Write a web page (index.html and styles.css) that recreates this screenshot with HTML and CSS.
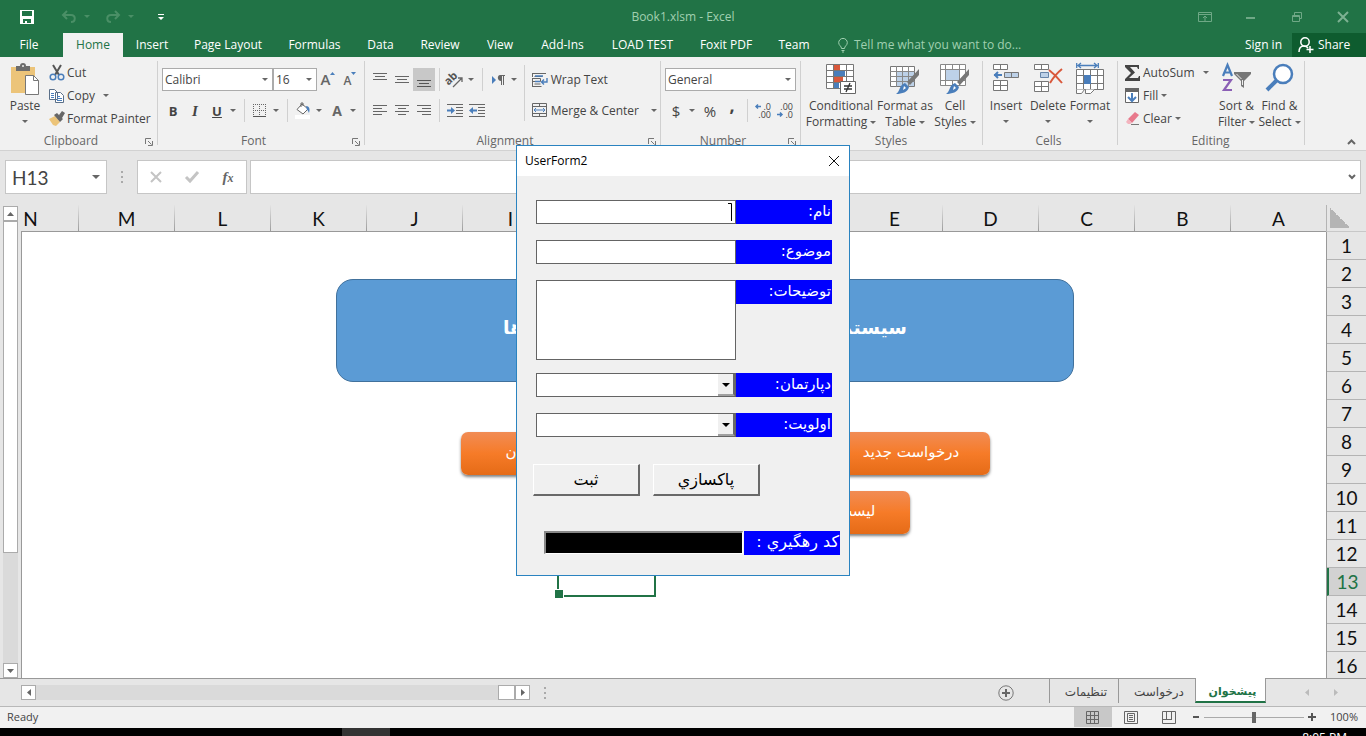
FILE: index.html
```html
<!DOCTYPE html>
<html lang="en">
<head>
  <meta charset="UTF-8">
  <meta name="viewport" content="width=device-width, initial-scale=1.0">
  <title>Book1.xlsm - Excel</title>
  <link rel="stylesheet" href="styles.css">
</head>
<body>
  <header class="title-bar">
    <div class="quick-access">
      <button aria-label="Save"><svg width="14" height="14" viewBox="0 0 14 14"><path fill="#fff" fill-rule="evenodd" d="M0 0h14v14H0zM2 1v5h10V1zM3 9v4h2v-2h2v2h4V9z"/></svg></button>
      <button class="dim" aria-label="Undo"><svg width="14" height="12" viewBox="0 0 14 12"><path fill="none" stroke="#4a8f66" stroke-width="2" d="M5 0L1 4l4 4M1 4h8c5 0 5 7 0 7"/></svg><span class="caret"></span></button>
      <button class="dim" aria-label="Redo"><svg width="14" height="12" viewBox="0 0 14 12"><path fill="none" stroke="#4a8f66" stroke-width="2" d="M9 0l4 4-4 4M13 4H5c-5 0-5 7 0 7"/></svg><span class="caret"></span></button>
      <button aria-label="Customize toolbar"><svg width="6" height="8" viewBox="0 0 6 8"><path fill="#fff" d="M0 1h6v1H0zM0 4h6L3 7z"/></svg></button>
    </div>
    <h1>Book1.xlsm - Excel</h1>
    <div class="window-buttons">
      <button aria-label="Ribbon display"><svg width="14" height="10" viewBox="0 0 14 10"><path fill="none" stroke="#6fa886" d="M.5.5h13v9H.5zM1 2.500h12M7 9V4M5 6l2-2 2 2"/></svg></button>
      <button aria-label="Minimize"><svg width="10" height="10" viewBox="0 0 10 10"><path stroke="#6fa886" stroke-width="2" d="M0 6h9"/></svg></button>
      <button aria-label="Restore"><svg width="10" height="10" viewBox="0 0 10 10"><path fill="none" stroke="#6fa886" d="M.5 3.500h7v6h-7zM2.500 3V.5h7v6H8M0 4.500h8"/></svg></button>
      <button aria-label="Close"><svg width="10" height="10" viewBox="0 0 10 10"><path stroke="#7db192" stroke-width="2" d="M0 0l10 10M10 0L0 10"/></svg></button>
    </div>
  </header>

  <nav class="tabs">
    <button>File</button>
    <button class="active">Home</button>
    <button>Insert</button>
    <button>Page Layout</button>
    <button>Formulas</button>
    <button>Data</button>
    <button>Review</button>
    <button>View</button>
    <button>Add-Ins</button>
    <button>LOAD TEST</button>
    <button>Foxit PDF</button>
    <button>Team</button>
    <button class="tell-me"><svg width="10" height="15" viewBox="0 0 10 15"><path fill="none" stroke="#a0d0b0" d="M3.500 10.500C3.500 8 .7 7.500.7 4.700a4.300 4.300 0 0 1 8.600 0C9.300 7.500 6.500 8 6.500 10.500zM3.500 12.500h3M4 14h2"/></svg>Tell me what you want to do...</button>
    <button class="sign-in">Sign in</button>
    <button class="share"><svg width="16" height="16" viewBox="0 0 16 16"><circle cx="7" cy="5" r="4.200" fill="none" stroke="#fff" stroke-width="1.500"/><path fill="none" stroke="#fff" stroke-width="1.500" d="M1 15c0-4 2-6 5-6 2 0 3 .5 4 2M12 9v7M8.500 12.500h7"/></svg>Share</button>
  </nav>

  <section class="ribbon">
    <div class="group clipboard">
      <div class="group-body">
        <button class="big">
          <svg width="30" height="32" viewBox="0 0 30 32"><path fill="#ecc479" d="M1 4h24v26H1z"/><path fill="#6d6d6d" d="M6 3h4a3 3 0 0 1 6 0h4v5H6z"/><circle cx="13" cy="3" r="1" fill="#eee"/><path fill="#fff" stroke="#777" d="M15.500 12.500h8l5 5v14h-13z"/><path fill="none" stroke="#777" d="M23.500 12.500v5h5"/></svg>
          Paste<span class="caret"></span>
        </button>
        <div class="stack">
          <button><svg width="16" height="16" viewBox="0 0 16 16"><path stroke="#555" stroke-width="2" d="M4 0l6 10M12 0L6 10"/><g fill="none" stroke="#4a7ebb" stroke-width="1.500"><circle cx="4" cy="12" r="2.800"/><circle cx="12" cy="12" r="2.800"/></g></svg>Cut</button>
          <button><svg width="16" height="16" viewBox="0 0 16 16"><path fill="#fff" stroke="#5a6f88" d="M.5 1.500h5l3 3v7h-8zM6.500 4.500h5l3 3v7h-8z"/><path stroke="#4a7ebb" d="M2 5.500h3M2 7.500h3M2 9.500h3M8 8.500h3M8 10.500h5M8 12.500h5"/></svg>Copy <span class="caret wide"></span></button>
          <button><svg width="16" height="16" viewBox="0 0 16 16"><path fill="#ecc479" d="M0 8l6-3 5 6-4 4-3-1z"/><path fill="#666" d="M5 4l3-2 6 6-3 3zM10 4l3-4 3 2-3 5z"/></svg>Format Painter</button>
        </div>
      </div>
      <div class="group-name">Clipboard<svg class="launcher" width="8" height="8"><use href="#launch"/></svg></div>
    </div>

    <div class="group font">
      <div class="group-body rows">
        <div class="row">
          <span class="combo font-name"><select aria-label="Font"><option>Calibri</option></select><span class="caret"></span></span>
          <span class="combo font-size"><select aria-label="Font size"><option>16</option></select><span class="caret"></span></span>
          <button class="tool grow-font" aria-label="Increase font size"><span>A</span><svg width="5" height="4" viewBox="0 0 5 4"><path fill="#4a7ebb" d="M0 3h5L2.500 0z"/></svg></button>
          <button class="tool shrink-font" aria-label="Decrease font size"><span>A</span><svg width="5" height="4" viewBox="0 0 5 4"><path fill="#4a7ebb" d="M0 0h5L2.500 3z"/></svg></button>
        </div>
        <div class="row">
          <button class="tool bold">B</button>
          <button class="tool italic">I</button>
          <button class="tool underline">U</button>
          <button class="drop" aria-label="Underline style"><span class="caret"></span></button>
          <span class="sep"></span>
          <button class="tool" aria-label="Borders"><svg width="14" height="14" viewBox="0 0 14 14"><path fill="none" stroke="#666" stroke-dasharray="1 1" d="M.5 0v13M6.500 0v13M12.500 0v13M0 .5h13M0 6.500h13"/><path stroke="#555" d="M0 12.500h13"/></svg></button>
          <button class="drop" aria-label="Border style"><span class="caret"></span></button>
          <span class="sep"></span>
          <button class="tool" aria-label="Fill color"><svg width="18" height="17" viewBox="0 0 18 17"><path fill="#fff" stroke="#666" d="M3 7.500L8 2l6 5-5 5zM7 5V1h2v3"/><path fill="#4a7ebb" d="M12 4c4 0 4 4 3 7-1-2-1-3-2-3z"/><path fill="#fff" d="M1 13h15v4H1z"/></svg></button>
          <button class="drop" aria-label="Fill colors"><span class="caret"></span></button>
          <button class="tool font-color">A</button>
          <button class="drop" aria-label="Font colors"><span class="caret"></span></button>
        </div>
      </div>
      <div class="group-name">Font<svg class="launcher" width="8" height="8"><use href="#launch"/></svg></div>
    </div>

    <div class="group alignment">
      <div class="group-body">
        <div class="rows">
          <div class="row">
            <button class="tool" aria-label="Top align"><svg width="14" height="14" viewBox="0 0 14 14"><path stroke="#666" d="M0 .5h14M2 3.500h10M0 6.500h14"/></svg></button>
            <button class="tool" aria-label="Middle align"><svg width="14" height="14" viewBox="0 0 14 14"><path stroke="#666" d="M0 3.500h14M2 6.500h10M0 9.500h14"/></svg></button>
            <button class="tool pressed" aria-label="Bottom align"><svg width="14" height="14" viewBox="0 0 14 14"><path stroke="#555" d="M0 7.500h14M2 10.500h10M0 13.500h14"/></svg></button>
            <span class="sep"></span>
            <button class="tool" aria-label="Orientation"><svg width="16" height="16" viewBox="0 0 16 16"><text x="0" y="12" font-size="11" font-weight="bold" fill="#555" transform="rotate(-45 3 11)">ab</text><path fill="none" stroke="#666" stroke-width="1.300" d="M6 15l9-9M11 6h4v4"/></svg></button>
            <button class="drop" aria-label="Orientation options"><span class="caret"></span></button>
            <span class="sep"></span>
            <button class="tool" aria-label="Text direction"><svg width="13" height="10" viewBox="0 0 13 10"><path fill="#4a7ebb" d="M0 1l4 4-4 4z"/><path fill="#666" d="M8 0h5v1h-1v9h-1V1h-1v9H9V6C5 6 5 0 8 0z"/></svg></button>
            <button class="drop" aria-label="Direction options"><span class="caret"></span></button>
          </div>
          <div class="row">
            <button class="tool" aria-label="Align left"><svg width="14" height="12" viewBox="0 0 14 12"><path stroke="#666" d="M0 .5h14M0 3.500h9M0 6.500h14M0 9.500h9"/></svg></button>
            <button class="tool" aria-label="Center"><svg width="14" height="12" viewBox="0 0 14 12"><path stroke="#666" d="M0 .5h14M3 3.500h8M0 6.500h14M3 9.500h8"/></svg></button>
            <button class="tool" aria-label="Align right"><svg width="14" height="12" viewBox="0 0 14 12"><path stroke="#666" d="M0 .5h14M5 3.500h9M0 6.500h14M5 9.500h9"/></svg></button>
            <span class="sep"></span>
            <button class="tool" aria-label="Decrease indent"><svg width="16" height="14" viewBox="0 0 16 14"><path stroke="#666" d="M0 .5h16M9 3.500h7M9 6.500h7M9 9.500h7M0 12.500h16"/><path fill="#4a7ebb" d="M0 5.500h4V3l4 3.500L4 10V7.500H0z"/></svg></button>
            <button class="tool" aria-label="Increase indent"><svg width="16" height="14" viewBox="0 0 16 14"><path stroke="#666" d="M0 .5h16M9 3.500h7M9 6.500h7M9 9.500h7M0 12.500h16"/><path fill="#4a7ebb" d="M8 5.500H4V3L0 6.500 4 10V7.500h4z"/></svg></button>
          </div>
        </div>
        <span class="sep tall"></span>
        <div class="rows">
          <button class="text-tool"><svg width="16" height="16" viewBox="0 0 16 16"><path fill="none" stroke="#666" d="M.5 1v4M14 1.500H.5M2.500 4.500h8M.5 6v9M.5 6.500h8v3h-8M.5 14.500h9M2.500 12h6"/><path fill="none" stroke="#4a7ebb" stroke-width="1.400" d="M3 4h8M3 9.500h5M15 6v4h-5M12 7.500L9.500 10l2.500 2.500"/></svg>Wrap Text</button>
          <button class="text-tool"><svg width="16" height="15" viewBox="0 0 16 15"><path fill="none" stroke="#666" d="M.5.5h14v13H.5zM0 3.500h15M0 10.500h15M7.500 0v4M7.500 10v4"/><path fill="none" stroke="#4a7ebb" d="M2 7h11M4 5L2 7l2 2M11 5l2 2-2 2"/></svg>Merge &amp; Center<span class="caret wide"></span></button>
        </div>
      </div>
      <div class="group-name">Alignment<svg class="launcher" width="8" height="8"><use href="#launch"/></svg></div>
    </div>

    <div class="group number">
      <div class="group-body rows">
        <div class="row">
          <span class="combo number-format"><select aria-label="Number format"><option>General</option></select><span class="caret"></span></span>
        </div>
        <div class="row">
          <button class="tool symbol">$</button>
          <button class="drop" aria-label="Currency"><span class="caret"></span></button>
          <button class="tool symbol">%</button>
          <button class="tool comma">,</button>
          <span class="sep"></span>
          <button class="tool decimals" aria-label="Increase decimal"><span>.0</span><span>.00</span><svg width="6" height="5" viewBox="0 0 6 5"><path fill="none" stroke="#4a7ebb" stroke-width="1.500" d="M1 2.500h5M3 .5l-2 2 2 2"/></svg></button>
          <button class="tool decimals less" aria-label="Decrease decimal"><span>.00</span><span>.0</span><svg width="6" height="5" viewBox="0 0 6 5"><path fill="none" stroke="#4a7ebb" stroke-width="1.500" d="M0 2.500h5M3 .5l2 2-2 2"/></svg></button>
        </div>
      </div>
      <div class="group-name">Number<svg class="launcher" width="8" height="8"><use href="#launch"/></svg></div>
    </div>

    <div class="group styles">
      <div class="group-body">
        <button class="big">
          <svg width="30" height="32" viewBox="0 0 30 32"><path fill="#fff" stroke="#777" d="M.5 1.500h27v24H.5zM0 7.500h28M0 13.500h28M0 19.500h28M7.500 1v25M20.500 1v25"/><path fill="#d9583b" d="M8 2h6v5H8zM8 14h9v5H8z"/><path fill="#4a7ebb" d="M8 8h11v5H8zM8 20h5v5H8z"/><path fill="#fff" stroke="#666" d="M14.500 18.500h15v12h-15z"/><path stroke="#333" stroke-width="1.300" d="M18 23h8M18 26h8M24 20l-4 9"/></svg>
          Conditional<span>Formatting<span class="caret"></span></span>
        </button>
        <button class="big">
          <svg width="30" height="32" viewBox="0 0 30 32"><path fill="#fff" stroke="#777" d="M.5 3.500h24v20H.5z"/><path fill="#bdd1e8" d="M7 9h17v14H7z"/><path fill="none" stroke="#888" d="M0 8.500h25M0 13.500h25M0 18.500h25M6.500 3v21M12.500 3v21M18.500 3v21"/><use href="#brush"/></svg>
          Format as<span>Table<span class="caret"></span></span>
        </button>
        <button class="big">
          <svg width="30" height="32" viewBox="0 0 30 32"><path fill="#fff" stroke="#888" d="M.5 1.500h25v21H.5zM0 6.500h26M0 17.500h26M5.500 1v22M19.500 1v22M12.500 1v22"/><path fill="#bdd1e8" d="M6 7h13v10H6z"/><use href="#brush"/></svg>
          Cell<span>Styles<span class="caret"></span></span>
        </button>
      </div>
      <div class="group-name">Styles</div>
    </div>

    <div class="group cells">
      <div class="group-body">
        <button class="big">
          <svg width="28" height="32" viewBox="0 0 28 32"><path fill="#fff" stroke="#777" d="M1.500 1.500h14v5h-14zM8.500 1v6M1.500 17.500h14v10h-14zM8.500 17v11M1 22.500h15"/><path fill="#bdd1e8" stroke="#777" d="M12.500 9.500h14v5h-14zM19.500 9v6"/><path fill="none" stroke="#4a7ebb" stroke-width="2" d="M2 12h8M6 9l-3 3 3 3"/></svg>
          Insert<span class="caret"></span>
        </button>
        <button class="big">
          <svg width="30" height="32" viewBox="0 0 30 32"><path fill="#fff" stroke="#777" d="M1.500 1.500h14v5h-14zM8.500 1v6M1.500 18.500h14v10h-14zM8.500 18v11M1 23.500h15"/><path fill="#bdd1e8" stroke="#6784a8" d="M7.500 9.500h8v5h-8z"/><path stroke="#d9583b" stroke-width="2" fill="none" d="M16 7c4 3 9 8 13 13M29 6c-5 4-9 9-12 14"/></svg>
          Delete<span class="caret"></span>
        </button>
        <button class="big">
          <svg width="28" height="32" viewBox="0 0 28 32"><path fill="#fff" stroke="#777" d="M.5 6.500h27v20H.5zM0 12.500h28M0 20.500h28M7.500 6v21M14.500 6v21M21.500 6v21"/><path fill="#4a7ebb" d="M8 12h7v9H8z"/><path fill="none" stroke="#4a7ebb" stroke-width="1.300" d="M.7 0v5M22.300 0v5M2 2.500h19M5 0L2 2.500 5 5M18 0l3 2.500L18 5"/><path fill="#fff" stroke="#777" d="M.5 26.500v4h5l3-4M9.500 26.500v4h5l4-4"/></svg>
          Format<span class="caret"></span>
        </button>
      </div>
      <div class="group-name">Cells</div>
    </div>

    <div class="group editing">
      <div class="group-body">
        <div class="stack">
          <button><svg width="16" height="16" viewBox="0 0 16 16"><path fill="#444" d="M0 0h14v4h-1l-1-2H5l5 5.500L4 13h9l1-2h1v5H0v-2l6-6L0 2z"/></svg>AutoSum<span class="caret wide"></span></button>
          <button><svg width="16" height="16" viewBox="0 0 16 16"><path fill="#fff" stroke="#666" d="M.5.5h13v14H.5z"/><path fill="#666" d="M0 0h14v4H0z"/><path fill="none" stroke="#4a7ebb" stroke-width="2" d="M7 5v7M3 9l4 4 4-4"/></svg>Fill<span class="caret"></span></button>
          <button><svg width="16" height="16" viewBox="0 0 16 16"><path fill="#e8798c" d="M3 8l7-7 4 3-7 8z"/><path fill="#f3b4be" d="M3 8l4 4-2 1H3l-2-2z"/><path stroke="#777" d="M6 13.500h8"/></svg>Clear<span class="caret"></span></button>
        </div>
        <button class="big">
          <svg width="30" height="32" viewBox="0 0 30 32"><path fill="none" stroke="#4a7ebb" stroke-width="2.200" d="M1 13L5.500 2 10 13M3 9.500h5"/><path fill="none" stroke="#8b5fb5" stroke-width="2.200" d="M1 17h8L2 27h8"/><path fill="#777" d="M12 9h17v2l-7 7v7l-3-2v-5l-7-7z"/><path fill="#eee" d="M20 17h1v5h-1zM15 11l5 5h-1l-5-5z"/></svg>
          Sort &amp;<span>Filter<span class="caret"></span></span>
        </button>
        <button class="big">
          <svg width="30" height="32" viewBox="0 0 30 32"><circle cx="18" cy="11" r="9" fill="#fff" stroke="#4a7ebb" stroke-width="2.500"/><path stroke="#4a7ebb" stroke-width="4" d="M12 17L2 27"/></svg>
          Find &amp;<span>Select<span class="caret"></span></span>
        </button>
      </div>
      <div class="group-name">Editing</div>
    </div>
    <button class="collapse" aria-label="Collapse ribbon"><svg width="9" height="6" viewBox="0 0 9 6"><path fill="none" stroke="#666" stroke-width="2" d="M1 5l3.500-3.500L8 5"/></svg></button>
  </section>

  <section class="formula-bar">
    <div class="name-box"><input type="text" value="H13" aria-label="Name box"><span class="caret big-caret"></span></div>
    <span class="dots"></span>
    <div class="formula-buttons">
      <button aria-label="Cancel"><svg width="12" height="12" viewBox="0 0 12 12"><path stroke="#c4c4c4" stroke-width="2" d="M1 1l10 10M11 1L1 11"/></svg></button>
      <button aria-label="Enter"><svg width="14" height="12" viewBox="0 0 14 12"><path fill="none" stroke="#c4c4c4" stroke-width="3" d="M1 6l4 4 8-9"/></svg></button>
      <button class="fx">f<small>x</small></button>
    </div>
    <div class="formula"><input type="text" aria-label="Formula"><svg width="8" height="6" viewBox="0 0 8 6"><path fill="none" stroke="#666" stroke-width="2" d="M1 1l3 3 3-3"/></svg></div>
  </section>

  <main class="workbook">
    <div class="v-scroll">
      <button aria-label="Scroll up"><svg width="7" height="4" viewBox="0 0 7 4"><path fill="#666" d="M0 4h7L3.500 0z"/></svg></button>
      <div class="v-track"><div class="v-thumb"></div></div>
      <button aria-label="Scroll down"><svg width="7" height="4" viewBox="0 0 7 4"><path fill="#666" d="M0 0h7L3.500 4z"/></svg></button>
    </div>
    <div class="grid">
      <div class="corner"></div>
      <div class="columns">
        <span>A</span><span>B</span><span>C</span><span>D</span><span>E</span><span>F</span><span>G</span><span>H</span><span>I</span><span>J</span><span>K</span><span>L</span><span>M</span><span>N</span>
      </div>
      <div class="row-heads">
        <span>1</span><span>2</span><span>3</span><span>4</span><span>5</span><span>6</span><span>7</span><span>8</span><span>9</span><span>10</span><span>11</span><span>12</span><span class="current">13</span><span>14</span><span>15</span><span>16</span>
      </div>
      <div class="canvas">
        <div class="banner"><span>سیستم مدیریت</span><span>درخواست ها</span></div>
        <button class="shape new-request">درخواست جدید</button>
        <button class="shape experts">کارشناسان</button>
        <button class="shape user-list">لیست کاربران</button>
        <div class="selection"></div>
      </div>
    </div>
  </main>

  <footer class="sheet-bar">
    <div class="h-scroll">
      <button aria-label="Scroll left"><svg width="4" height="7" viewBox="0 0 4 7"><path fill="#666" d="M4 0v7L0 3.500z"/></svg></button>
      <div class="h-track"><div class="h-thumb"></div></div>
      <button aria-label="Scroll right"><svg width="4" height="7" viewBox="0 0 4 7"><path fill="#666" d="M0 0v7l4-3.500z"/></svg></button>
    </div>
    <span class="dots"></span>
    <button class="add-sheet" aria-label="New sheet"><svg width="16" height="16" viewBox="0 0 16 16"><circle cx="8" cy="8" r="7.200" fill="none" stroke="#777"/><path stroke="#666" stroke-width="2" d="M8 4v8M4 8h8"/></svg></button>
    <div class="sheets">
      <button class="settings">تنظیمات</button>
      <button class="requests">درخواست</button>
      <button class="active">پیشخوان</button>
    </div>
    <div class="sheet-nav">
      <svg width="4" height="7" viewBox="0 0 4 7"><path fill="#bbb" d="M4 0v7L0 3.500z"/></svg>
      <svg width="4" height="7" viewBox="0 0 4 7"><path fill="#bbb" d="M0 0v7l4-3.500z"/></svg>
    </div>
  </footer>

  <div class="status-bar">
    <span>Ready</span>
    <div class="views">
      <button class="pressed" aria-label="Normal"><svg width="14" height="13" viewBox="0 0 14 13"><path fill="none" stroke="#666" d="M.5.5h12v12H.5zM0 4.500h13M0 8.500h13M4.500 0v13M8.500 0v13"/></svg></button>
      <button aria-label="Page layout"><svg width="14" height="13" viewBox="0 0 14 13"><path fill="none" stroke="#666" d="M.5.5h13v12H.5zM3.500 2.500h7v8h-7zM5 4.500h4M5 6.500h4M5 8.500h4"/></svg></button>
      <button aria-label="Page break"><svg width="14" height="13" viewBox="0 0 14 13"><path fill="none" stroke="#666" d="M.5.5h13v12H.5zM4.500 0v8M0 8.500h9M9.500 0v9"/></svg></button>
    </div>
    <div class="zoom">
      <button class="minus" aria-label="Zoom out"></button>
      <input type="range" min="0" max="100" value="50" aria-label="Zoom">
      <button class="plus" aria-label="Zoom in"></button>
      <span>100%</span>
    </div>
  </div>
  <div class="taskbar"><span class="task"></span><time>8:05 PM</time></div>

  <form class="user-form">
    <div class="form-title"><span>UserForm2</span><button type="button" aria-label="Close"><svg width="12" height="12" viewBox="0 0 12 12"><path stroke="#111" d="M1 1l10 10M11 1L1 11"/></svg></button></div>
    <div class="fields">
      <div class="field"><input type="text" id="name" dir="rtl"><svg class="cursor" width="4" height="18" viewBox="0 0 4 18"><path fill="none" stroke="#000" d="M0 .5h3.500V18"/></svg><label for="name">نام:</label></div>
      <div class="field"><input type="text" id="subject" dir="rtl"><label for="subject">موضوع:</label></div>
      <div class="field notes"><textarea id="notes" dir="rtl"></textarea><label for="notes">توضیحات:</label></div>
      <div class="field"><span class="form-combo"><select id="department"></select><span class="arrow"></span></span><label for="department">دپارتمان:</label></div>
      <div class="field"><span class="form-combo"><select id="priority"></select><span class="arrow"></span></span><label for="priority">اولویت:</label></div>
    </div>
    <div class="form-buttons">
      <button type="button">ثبت</button>
      <button type="button">پاکسازي</button>
    </div>
    <div class="tracking"><input type="text" id="tracking" readonly><label for="tracking">کد رهگيري :</label></div>
  </form>

  <svg class="defs" width="0" height="0">
    <symbol id="launch" viewBox="0 0 8 8"><path fill="none" stroke="#777" d="M.5 6V.5H6M3 3l3.500 3.500M7.500 3v4.500H3"/></symbol>
    <symbol id="brush" viewBox="0 0 30 32"><path fill="#777" d="M29 6v6l-9 10-3-3zM29 7l-4 4z"/><path fill="#4a7ebb" d="M15 20l4 4c-1 5-7 7-13 7 4-2 3-9 9-11z"/><path fill="#fff" d="M14 23l2 2-3 2z"/></symbol>
  </svg>
</body>
</html>
```
FILE: styles.css
```css
* {
  box-sizing: border-box;
}
body {
  margin: 0;
  height: 100vh;
  display: flex;
  flex-direction: column;
  overflow: hidden;
  position: relative;
  background: #e6e6e6;
  color: #444;
  font-family: "Open Sans", "DejaVu Sans", sans-serif;
  font-size: 12px;
  line-height: 16px;
}
button {
  margin: 0;
  padding: 0;
  border: 0;
  background: none;
  color: inherit;
  font: inherit;
}
input, select, textarea {
  margin: 0;
  font: inherit;
  color: inherit;
  outline: none;
  border-radius: 0;
}
svg {
  flex: none;
  overflow: visible;
}
.defs {
  position: absolute;
}
.caret {
  display: inline-block;
  flex: none;
  border: 3px solid transparent;
  border-top-color: #666;
  border-bottom: 0;
  margin-left: 3px;
  vertical-align: middle;
}
.caret.wide {
  margin-left: 9px;
}
.caret.big-caret {
  border-width: 4px 4px 0;
}

/* title bar */
.title-bar {
  display: grid;
  grid-template-columns: 1fr auto 1fr;
  align-items: center;
  height: 33px;
  flex: none;
  background: #217346;
}
.title-bar h1 {
  margin: 0;
  font-size: 12px;
  font-weight: normal;
  color: #a0d0b0;
}
.quick-access {
  display: flex;
  align-items: center;
  padding-left: 20px;
}
.quick-access button {
  display: flex;
  align-items: center;
  margin-right: 16px;
}
.quick-access button:first-child {
  margin-right: 28px;
}
.quick-access button:last-child {
  margin-left: 8px;
}
.quick-access .caret {
  margin-left: 8px;
  border-top-color: #4a8f66;
}
.window-buttons {
  display: flex;
  justify-content: flex-end;
}
.window-buttons button {
  width: 46px;
  height: 30px;
  display: flex;
  align-items: center;
  justify-content: center;
}

/* ribbon tabs */
.tabs {
  display: grid;
  grid-template-columns: 63px 60px 58px 94px 79px 53px 66px 54px 71px 89px 78px 58px auto 1fr 74px;
  height: 24px;
  flex: none;
  background: #217346;
  color: #fff;
}
.tabs button {
  white-space: nowrap;
}
.tabs button:first-child {
  padding-right: 5px;
}
.tabs .active {
  background: #f1f1f1;
  color: #217346;
}
.tabs .tell-me {
  display: flex;
  align-items: center;
  gap: 6px;
  padding-left: 15px;
  color: #a0d0b0;
}
.tabs .sign-in {
  text-align: right;
  padding-right: 10px;
}
.tabs .share {
  display: flex;
  align-items: center;
  gap: 4px;
  padding-left: 6px;
  background: #0e5c2f;
}

/* ribbon */
.ribbon {
  display: flex;
  height: 94px;
  flex: none;
  background: #f1f1f1;
  border-bottom: 1px solid #d2d2d2;
}
.group {
  display: flex;
  flex-direction: column;
  flex: none;
  position: relative;
  padding: 4px 4px 0;
}
.group::after {
  content: "";
  position: absolute;
  right: 0;
  top: 4px;
  bottom: 5px;
  border-right: 1px solid #d0d0d0;
}
.clipboard { width: 158px; }
.font { width: 207px; }
.alignment { width: 296px; }
.number { width: 140px; }
.styles { width: 182px; }
.cells { width: 135px; padding-left: 2px; }
.editing { width: 187px; }
.group-body {
  display: flex;
  height: 72px;
}
.group-name {
  position: relative;
  text-align: center;
  padding-right: 16px;
  color: #666;
}
.styles .group-name, .cells .group-name, .editing .group-name {
  padding-right: 2px;
}
.launcher {
  position: absolute;
  right: 1px;
  top: 5px;
}
.big {
  display: flex;
  flex-direction: column;
  align-items: center;
  padding-top: 2px;
  white-space: nowrap;
  width: 42px;
}
.big svg {
  margin-bottom: 3px;
}
.big > .caret {
  margin: 6px 0 0;
}
.styles .big { width: 44px; }
.styles .big:first-child { width: 72px; }
.styles .big:nth-child(2) { width: 56px; }
.editing .big { width: 43px; }
.stack {
  display: flex;
  flex-direction: column;
  padding-left: 3px;
}
.stack button {
  display: flex;
  align-items: center;
  gap: 2px;
  height: 23px;
  white-space: nowrap;
}
.stack .caret {
  margin-left: 1px;
}
.stack .caret.wide {
  margin-left: 6px;
}
.editing .stack {
  width: 93px;
}
.rows {
  display: flex;
  flex-direction: column;
  gap: 8px;
  padding-top: 7px;
}
.row {
  display: flex;
  align-items: center;
  height: 23px;
}
.tool {
  width: 22px;
  height: 23px;
  display: flex;
  align-items: center;
  justify-content: center;
}
.drop {
  width: 12px;
  height: 23px;
}
.drop .caret {
  display: block;
  width: 0;
  margin-left: 2px;
}
.sep {
  width: 1px;
  height: 23px;
  margin: 0 4px;
  background: #d0d0d0;
}
.sep.tall {
  height: 56px;
  margin: 4px 7px 0 3px;
}
.pressed {
  background: #c8c8c8;
}
.combo {
  position: relative;
  height: 23px;
}
.combo select {
  width: 100%;
  height: 23px;
  padding: 0 2px;
  appearance: none;
  border: 1px solid #ababab;
  background: #fff;
}
.combo .caret {
  position: absolute;
  right: 5px;
  top: 10px;
}
.font-name { width: 111px; }
.font-size { width: 44px; }
.grow-font, .shrink-font {
  align-items: flex-start;
  font-weight: 600;
  color: #666;
}
.number-format { width: 131px; }
.grow-font span {
  font-size: 15px;
  line-height: 23px;
}
.shrink-font span {
  line-height: 25px;
}
.grow-font svg, .shrink-font svg {
  margin-top: 4px;
}
.bold, .italic, .underline, .font-color {
  font-size: 13px;
  font-weight: 700;
  color: #444;
}
.italic {
  font-family: "Liberation Serif", serif;
  font-size: 15px;
  font-style: italic;
}
.underline {
  text-decoration: underline;
}
.font-color {
  font-size: 14px;
  color: #666;
}
.symbol {
  font-size: 15px;
}
.comma {
  font-size: 18px;
  font-weight: 700;
  padding-bottom: 11px;
}
.decimals {
  position: relative;
  flex-direction: column;
  align-items: flex-end;
  padding-right: 3px;
  font-size: 9px;
  line-height: 8px;
}
.decimals svg {
  position: absolute;
  left: 3px;
  top: 5px;
}
.decimals.less svg {
  top: 13px;
}
.text-tool {
  display: flex;
  align-items: center;
  gap: 3px;
  height: 23px;
  white-space: nowrap;
}
.collapse {
  margin: 76px 10px 0 auto;
  height: 16px;
}

/* formula bar */
.formula-bar {
  display: flex;
  flex: none;
  height: 54px;
  padding: 9px 5px 11px;
}
.name-box {
  display: flex;
  align-items: center;
  width: 102px;
  padding: 0 6px;
  background: #fff;
  border: 1px solid #c6c6c6;
}
.name-box input {
  flex: 1;
  min-width: 0;
  padding: 0;
  border: 0;
  font-family: "Lato", sans-serif;
  font-size: 19px;
}
.dots {
  flex: none;
  width: 2px;
  height: 12px;
  margin: auto 14px;
  background: repeating-linear-gradient(#aaa 0 2px, transparent 2px 5px);
}
.formula-buttons {
  display: flex;
  width: 110px;
  margin-right: 3px;
  background: #fff;
  border: 1px solid #c6c6c6;
}
.formula-buttons button {
  flex: 1;
}
.formula-buttons svg {
  display: block;
  margin: auto;
}
.fx {
  font-family: "Liberation Serif", serif;
  font-style: italic;
  font-weight: bold;
  font-size: 15px;
  color: #666;
}
.fx small {
  font-size: 12px;
}
.formula {
  display: flex;
  align-items: center;
  flex: 1;
  padding-right: 4px;
  background: #fff;
  border: 1px solid #c6c6c6;
}
.formula input {
  flex: 1;
  min-width: 0;
  border: 0;
}

/* worksheet */
.workbook {
  display: flex;
  flex: 1;
  min-height: 0;
  padding-left: 3px;
}
.v-scroll {
  display: flex;
  flex-direction: column;
  width: 15px;
  margin: 1px 3px 0 0;
}
.v-scroll button, .h-scroll button {
  display: flex;
  align-items: center;
  justify-content: center;
  flex: none;
  width: 15px;
  height: 15px;
  background: #fff;
  border: 1px solid #ababab;
}
.v-track {
  flex: 1;
  background: #dadada;
}
.v-thumb {
  height: 75%;
  background: #fff;
  border: 1px solid #ababab;
}
.grid {
  flex: 1;
  min-width: 0;
  display: grid;
  grid-template-columns: 40px 1fr;
  grid-template-rows: 27px 1fr;
  direction: rtl;
  overflow: hidden;
  font-family: "Lato", sans-serif;
  font-size: 19px;
  color: #111;
}
.corner {
  background: linear-gradient(45deg, #b4b4b4 50%, transparent 50%) no-repeat 3px 3px / 20px 20px;
  border-bottom: 1px solid #c8c8c8;
  border-left: 1px solid #b4b4b4;
}
.columns {
  display: flex;
  overflow: hidden;
  border-bottom: 1px solid #999;
}
.columns span {
  flex: none;
  width: 96px;
  line-height: 27px;
  text-align: center;
  border-left: 1px solid;
  border-image: linear-gradient(transparent, #999) 1;
}
.row-heads {
  min-height: 0;
  overflow: hidden;
  border-left: 1px solid #999;
}
.row-heads span {
  display: block;
  height: 28px;
  line-height: 28px;
  text-align: center;
  border-bottom: 1px solid #b4b4b4;
}
.row-heads .current {
  background: #d2d2d2;
  color: #217346;
  border-left: 2px solid #217346;
}
.canvas {
  position: relative;
  min-height: 0;
  overflow: hidden;
  background: #fff;
  border-left: 1px solid #999;
}
.banner {
  position: absolute;
  right: 252px;
  top: 47px;
  width: 738px;
  height: 103px;
  padding: 0 166px 8px;
  display: flex;
  align-items: center;
  justify-content: space-between;
  background: #5b9bd5;
  border: 1px solid #41719c;
  border-radius: 17px;
  color: #fff;
  font-family: "DejaVu Sans", sans-serif;
  font-size: 19px;
  font-weight: bold;
}
.shape {
  position: absolute;
  width: 158px;
  height: 43px;
  padding-bottom: 4px;
  border-radius: 7px;
  background: linear-gradient(#f18c55, #f67b28 50%, #e56b17);
  box-shadow: 0 2px 3px rgba(0, 0, 0, 0.5);
  color: #fff;
  font-family: "DejaVu Sans", sans-serif;
  font-size: 15px;
}
.new-request { right: 336px; top: 200px; }
.experts { right: 707px; top: 200px; }
.user-list { right: 416px; top: 259px; }
.selection {
  position: absolute;
  right: 670px;
  top: 335px;
  width: 99px;
  height: 30px;
  border: 2px solid #217346;
}
.selection::after {
  content: "";
  position: absolute;
  left: -5px;
  bottom: -4px;
  width: 8px;
  height: 8px;
  background: #217346;
  border: 1px solid #fff;
}

/* sheet tabs */
.sheet-bar {
  display: flex;
  align-items: center;
  flex: none;
  height: 28px;
  padding-left: 21px;
  border-top: 1px solid #999;
}
.h-scroll {
  display: flex;
  width: 509px;
}
.h-track {
  flex: 1;
  display: flex;
  justify-content: flex-end;
  background: #dadada;
}
.h-thumb {
  width: 17px;
  background: #fff;
  border: 1px solid #ababab;
}
.add-sheet {
  display: flex;
  margin-left: auto;
  margin-right: 35px;
}
.sheets {
  display: flex;
  align-self: flex-start;
  font-family: "DejaVu Sans", sans-serif;
}
.sheets button {
  height: 24px;
  padding-top: 2px;
  border-left: 1px solid #999;
}
.sheets .settings { width: 69px; padding-left: 4px; }
.sheets .requests { width: 77px; padding-left: 4px; }
.sheets .active {
  width: 71px;
  height: 25px;
  margin-top: -1px;
  padding: 4px 0 0 4px;
  background: #fff;
  border-right: 1px solid #999;
  border-bottom: 2px solid #217346;
  color: #217346;
  font-size: 11px;
  font-weight: bold;
}
.sheet-nav {
  display: flex;
  gap: 25px;
  width: 100px;
  padding-left: 39px;
}

/* status bar */
.status-bar {
  display: flex;
  align-items: center;
  flex: none;
  height: 22px;
  padding: 0 8px 1px 7px;
  background: #f1f1f1;
  border-top: 1px solid #b8b8b8;
  font-size: 11px;
}
.views {
  display: flex;
  align-self: stretch;
  margin-left: auto;
}
.views button {
  display: flex;
  align-items: center;
  justify-content: center;
  width: 38px;
}
.zoom {
  display: flex;
  align-items: center;
  padding-left: 4px;
}
.zoom button {
  width: 8px;
  height: 8px;
  background: linear-gradient(#555, #555) center / 6px 2px no-repeat;
}
.zoom .plus {
  background: linear-gradient(#555, #555) center / 8px 2px no-repeat, linear-gradient(#555, #555) center / 2px 8px no-repeat;
}
.zoom input {
  appearance: none;
  width: 100px;
  height: 12px;
  margin: 0 4px;
  background: linear-gradient(#aaa, #aaa) center / 100% 1px no-repeat;
}
.zoom input::-webkit-slider-thumb {
  appearance: none;
  width: 4px;
  height: 11px;
  background: #666;
}
.zoom span {
  width: 42px;
  text-align: right;
}
.taskbar {
  display: flex;
  flex: none;
  height: 8px;
  overflow: hidden;
  padding: 0 19px 0 342px;
  background: #000;
  color: #fff;
}
.task {
  width: 48px;
  background: #333;
}
.taskbar time {
  margin: 2px 0 0 auto;
}

/* user form */
.user-form {
  position: absolute;
  top: 145px;
  left: 0;
  right: 0;
  width: 334px;
  height: 431px;
  margin: 0 auto;
  background: #f0f0f0;
  border: 1px solid #2a83c0;
  color: #000;
  font-family: "DejaVu Sans", sans-serif;
  font-size: 15px;
}
.form-title {
  display: flex;
  align-items: center;
  justify-content: space-between;
  height: 30px;
  padding: 0 9px 0 8px;
  background: #fff;
  font-family: "Open Sans", sans-serif;
  font-size: 12px;
}
.form-title button {
  display: flex;
}
.fields {
  display: flex;
  flex-direction: column;
  gap: 16px;
  padding: 24px 0 0 19px;
}
.field, .tracking {
  display: flex;
  align-items: flex-start;
  position: relative;
}
.field input, .field textarea, .form-combo {
  width: 200px;
  height: 24px;
  border: 1px solid #646464;
  background: #fff;
  resize: none;
}
.field.notes {
  margin-bottom: -3px;
}
.field textarea {
  height: 80px;
}
.field label, .tracking label {
  width: 96px;
  height: 24px;
  padding-right: 1px;
  background: #00f;
  color: #fff;
  direction: rtl;
  line-height: 22px;
}
.cursor {
  position: absolute;
  left: 192px;
  top: 3px;
}
.form-combo {
  position: relative;
}
.form-combo select {
  width: 100%;
  height: 22px;
  border: 0;
  appearance: none;
  background: #fff;
}
.arrow {
  position: absolute;
  right: 0;
  top: 0;
  width: 17px;
  height: 22px;
  background: #f0f0f0;
  border-right: 2px solid #696969;
  border-bottom: 2px solid #a0a0a0;
}
.arrow::after {
  content: "";
  position: absolute;
  left: 4px;
  top: 9px;
  border: 4px solid transparent;
  border-top-color: #000;
  border-bottom: 0;
}
.form-buttons {
  display: flex;
  gap: 13px;
  padding: 27px 0 0 16px;
}
.form-buttons button {
  width: 107px;
  height: 32px;
  border: 1px solid #fff;
  border-right: 2px solid #696969;
  border-bottom: 2px solid #696969;
  font-size: 16px;
}
.tracking {
  padding: 35px 0 0 27px;
  font-size: 16px;
}
.tracking input {
  width: 199px;
  height: 23px;
  margin-right: 1px;
  background: #000;
  border: 2px solid #888;
  border-right: 1px solid #fff;
  border-bottom: 1px solid #fff;
}
```
